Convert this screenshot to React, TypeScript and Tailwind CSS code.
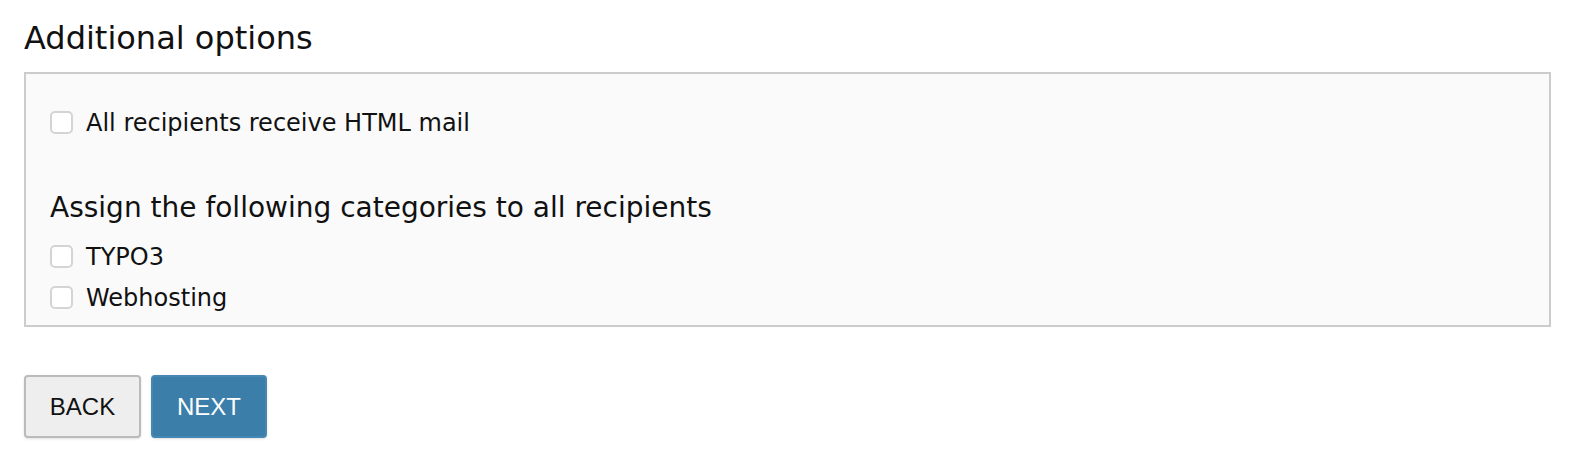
const categories = ["TYPO3", "Webhosting"];

const Checkbox = ({ label }: { label: string }) => (
  <label className="flex h-[41px] items-center">
    <span className="h-[23px] w-[23px] rounded-[5px] border-2 border-[#d4d4d4] bg-white" />
    <span className="ml-[13px] text-[24px] leading-none text-[#111]">{label}</span>
  </label>
);

export default function App() {
  return (
    <div className="min-h-[466px] bg-white pl-6 pr-[29px] pt-[20px] font-['DejaVu_Sans',Verdana,sans-serif] text-[#111]">
      {/* Title */}
      <h1 className="text-[32px] leading-[37px]">Additional options</h1>

      {/* Options box */}
      <div className="mt-[15px] border-2 border-[#cccccc] bg-[#fafafa] px-[24px] pb-[7px] pt-[28px]">
        <Checkbox label="All recipients receive HTML mail" />

        <h2 className="mt-[49px] text-[28px] leading-[32px]">
          Assign the following categories to all recipients
        </h2>
        <div className="mt-[12px]">
          {categories.map((c) => (
            <Checkbox key={c} label={c} />
          ))}
        </div>
      </div>

      {/* Buttons */}
      <div className="mt-[48px] flex gap-[10px] font-['Liberation_Sans',Arial,sans-serif]">
        <button className="h-[63px] w-[117px] rounded-[4px] border-2 border-[#bbbbbb] bg-[#eeeeee] text-[24px] text-[#111] shadow-sm">
          BACK
        </button>
        <button className="h-[63px] w-[116px] rounded-[4px] border-2 border-[#4588b3] bg-[#3b7ea9] text-[24px] text-white shadow-sm">
          NEXT
        </button>
      </div>
    </div>
  );
}
